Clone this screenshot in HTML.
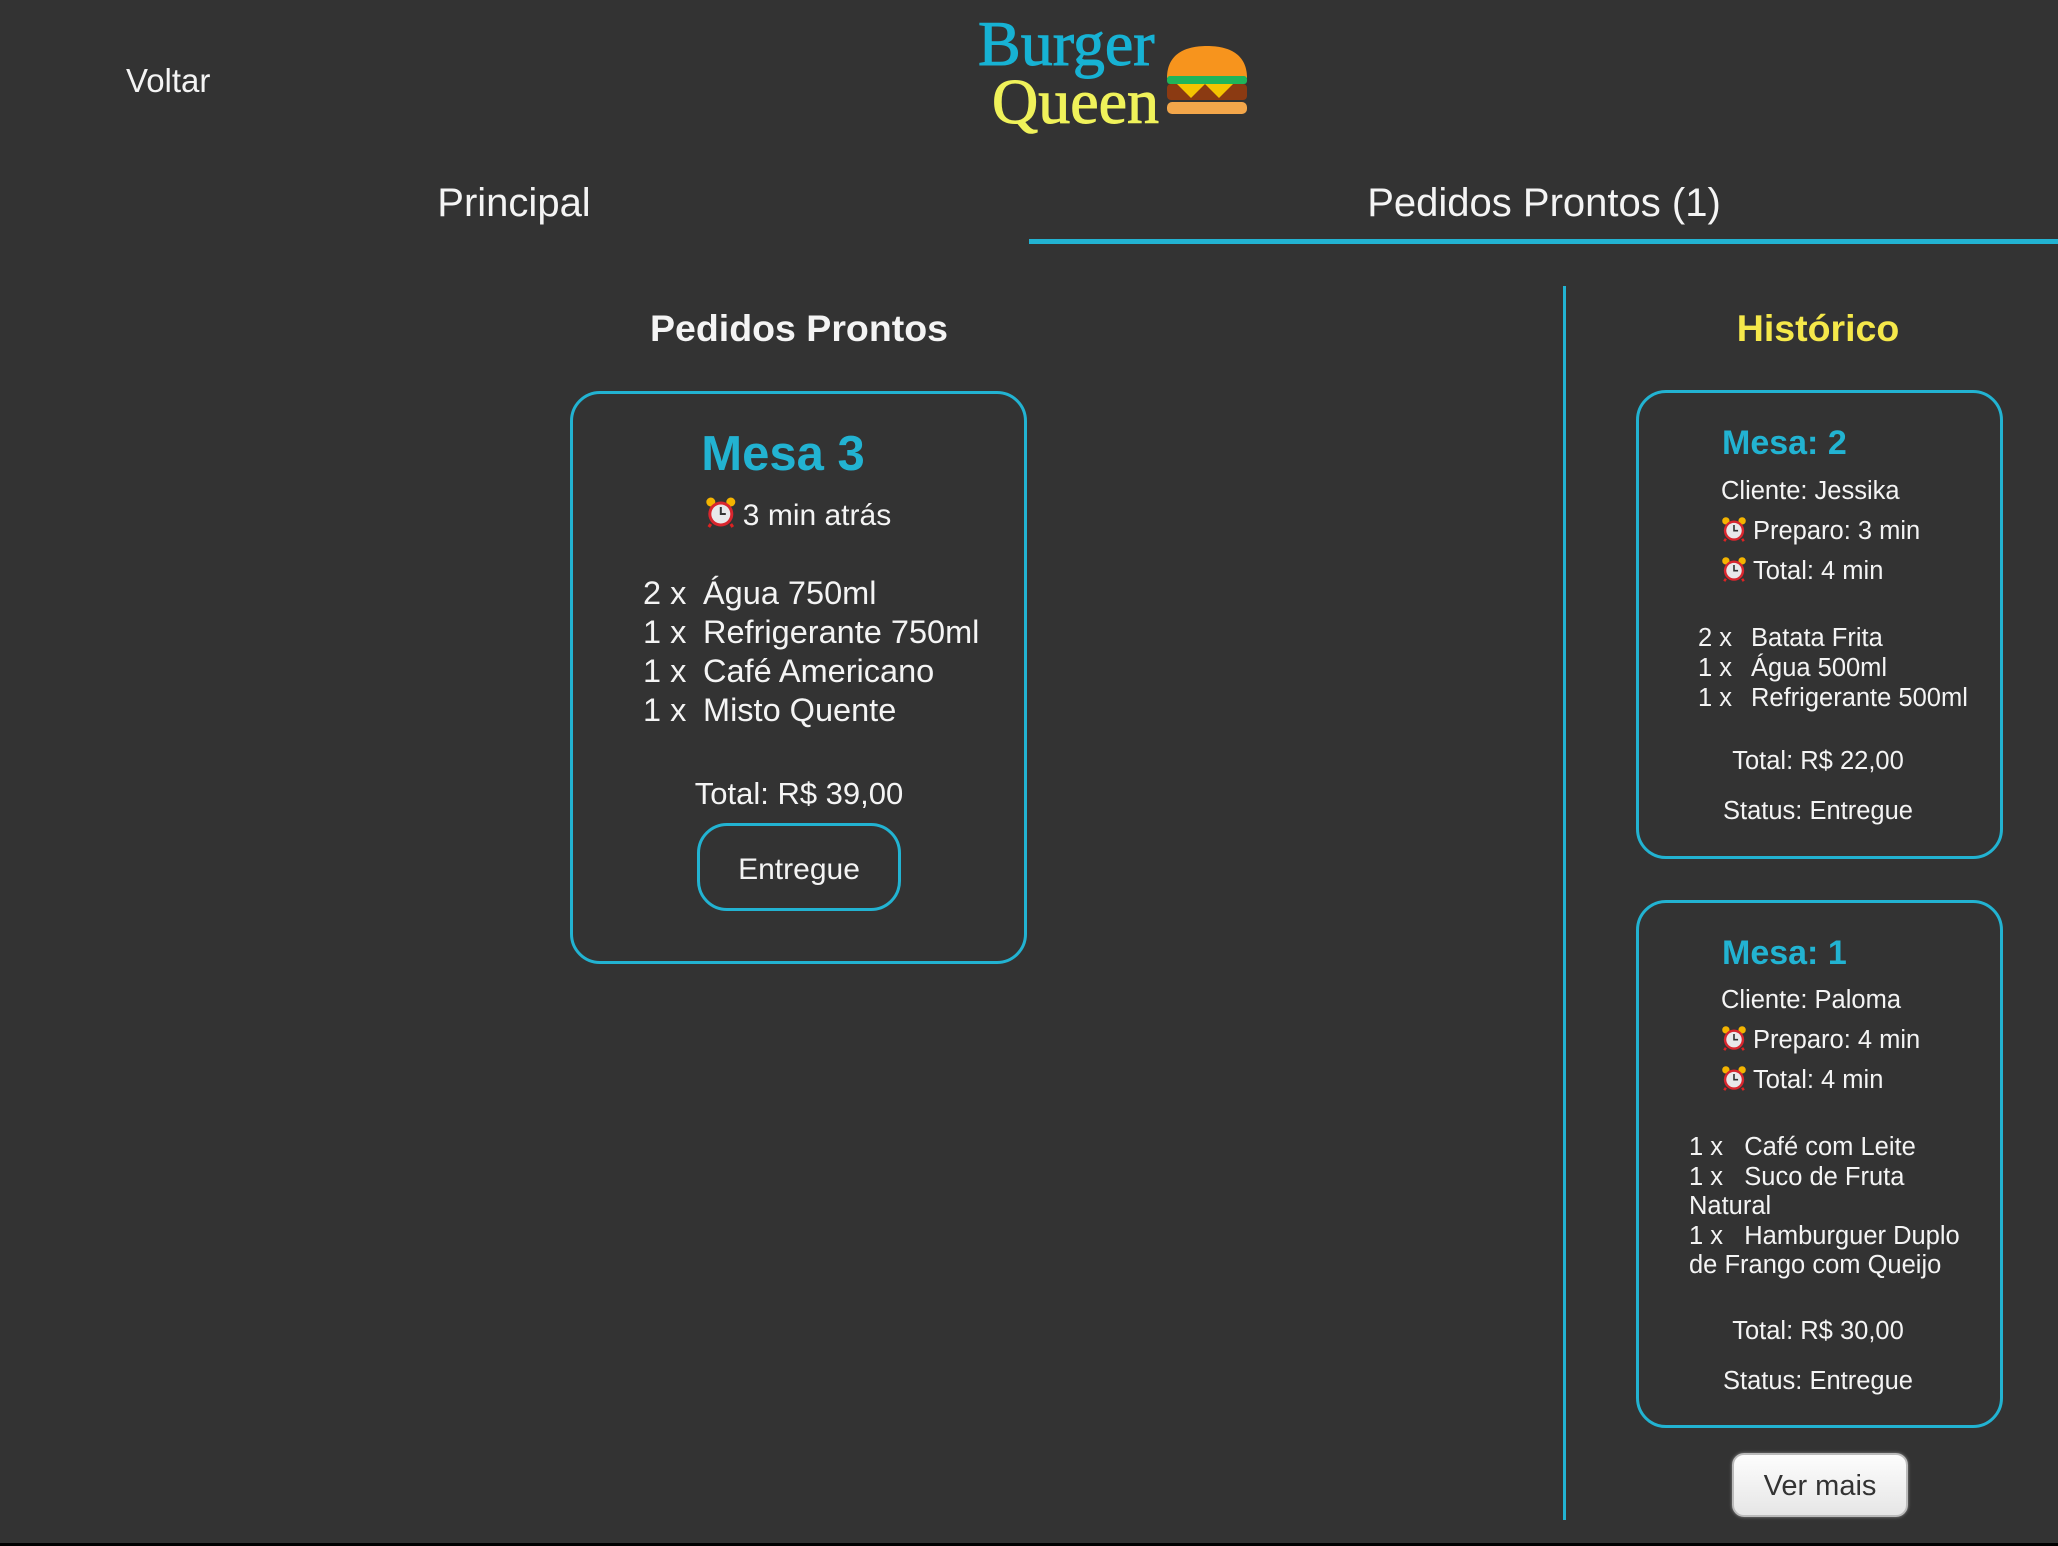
<!DOCTYPE html>
<html><head><meta charset="utf-8"><style>
body{margin:0;width:2058px;height:1546px;background:#333333;overflow:hidden;position:relative;font-family:"Liberation Sans",sans-serif;color:#f4f4f4}
.t{position:absolute;line-height:1;white-space:nowrap}
.c{text-align:center;transform:translateX(-50%)}
.card{position:absolute;border:3px solid #22b3d2;border-radius:30px;box-sizing:border-box}
.ck{display:inline-block;vertical-align:-3px;margin-right:6px}
</style></head><body>
<svg width="0" height="0" style="position:absolute"><defs>
<symbol id="clk" viewBox="0 0 32 32">
<circle cx="6" cy="6" r="4.5" fill="#f4b400"/><circle cx="26" cy="6" r="4.5" fill="#f4b400"/>
<path d="M6 28l-2 3M26 28l2 3" stroke="#d22" stroke-width="3"/>
<circle cx="16" cy="18" r="12.5" fill="#d9262e"/><circle cx="16" cy="18" r="9.5" fill="#e8e8ea"/>
<path d="M16 11v7h5" stroke="#333" stroke-width="2" fill="none"/>
</symbol></defs></svg>

<div class="t" style="left:126px;top:64px;font-size:33px">Voltar</div>
<div class="t" style="left:978px;top:12px;font-family:'Liberation Serif',serif;font-size:64px;color:#17b2d4;-webkit-text-stroke:1px #17b2d4">Burger</div>
<div class="t" style="left:992px;top:70px;font-family:'Liberation Serif',serif;font-size:64px;color:#f0f25a;-webkit-text-stroke:1px #f0f25a">Queen</div>
<svg style="position:absolute;left:1165px;top:44px" width="84" height="72" viewBox="0 0 84 72">
<path d="M2 34C2 10 20 2 42 2S82 10 82 34Z" fill="#f7941d"/>
<rect x="2" y="32" width="80" height="8" rx="3" fill="#1fb55a"/>
<rect x="2" y="40" width="80" height="16" rx="4" fill="#8b3a12"/>
<path d="M12 40l14 14 14-14 14 14 14-14Z" fill="#f5c400"/>
<rect x="2" y="58" width="80" height="12" rx="5" fill="#f3a64a"/>
</svg>

<div class="t c" style="left:514px;top:183px;font-size:40px">Principal</div>
<div class="t c" style="left:1544px;top:183px;font-size:40px">Pedidos Prontos (1)</div>
<div style="position:absolute;left:1029px;top:239px;width:1029px;height:5px;background:#22b3d2"></div>

<div class="t c" style="left:799px;top:310px;font-size:37.5px;font-weight:bold">Pedidos Prontos</div>
<div style="position:absolute;left:1563px;top:286px;width:3px;height:1234px;background:#22b3d2"></div>
<div class="t c" style="left:1818px;top:310px;font-size:37.5px;font-weight:bold;color:#f5e84a">Histórico</div>

<div class="card" style="left:570px;top:391px;width:457px;height:573px"></div>
<div class="t c" style="left:783px;top:430px;font-size:49px;font-weight:bold;color:#22b3d2">Mesa 3</div>
<div class="t c" style="left:798px;top:496px;font-size:30px"><svg class="ck" width="32" height="32"><use href="#clk"/></svg>3 min atrás</div>
<div class="t" style="left:643px;top:574px;font-size:32.5px;line-height:39px">2 x<br>1 x<br>1 x<br>1 x</div>
<div class="t" style="left:703px;top:574px;font-size:32.5px;line-height:39px">Água 750ml<br>Refrigerante 750ml<br>Café Americano<br>Misto Quente</div>
<div class="t c" style="left:799px;top:778px;font-size:31px">Total: R$ 39,00</div>
<div style="position:absolute;left:697px;top:823px;width:204px;height:88px;box-sizing:border-box;border:3px solid #22b3d2;border-radius:30px"></div>
<div class="t c" style="left:799px;top:855px;font-size:30px">Entregue</div>

<div class="card" style="left:1636px;top:390px;width:367px;height:469px"></div>
<div class="t" style="left:1722px;top:426px;font-size:34px;font-weight:bold;color:#22b3d2">Mesa: 2</div>
<div class="t" style="left:1721px;top:471px;font-size:25.5px;line-height:40px">Cliente: Jessika<br><svg class="ck" width="26" height="26"><use href="#clk"/></svg>Preparo: 3 min<br><svg class="ck" width="26" height="26"><use href="#clk"/></svg>Total: 4 min</div>
<div class="t" style="left:1698px;top:623px;font-size:25.5px;line-height:30px">2 x<br>1 x<br>1 x</div>
<div class="t" style="left:1751px;top:623px;font-size:25.5px;line-height:30px">Batata Frita<br>Água 500ml<br>Refrigerante 500ml</div>
<div class="t c" style="left:1818px;top:749px;font-size:25.5px">Total: R$ 22,00</div>
<div class="t c" style="left:1818px;top:799px;font-size:25.5px">Status: Entregue</div>

<div class="card" style="left:1636px;top:900px;width:367px;height:528px"></div>
<div class="t" style="left:1722px;top:936px;font-size:34px;font-weight:bold;color:#22b3d2">Mesa: 1</div>
<div class="t" style="left:1721px;top:980px;font-size:25.5px;line-height:40px">Cliente: Paloma<br><svg class="ck" width="26" height="26"><use href="#clk"/></svg>Preparo: 4 min<br><svg class="ck" width="26" height="26"><use href="#clk"/></svg>Total: 4 min</div>
<div class="t" style="left:1689px;top:1133px;font-size:25.5px;line-height:29.5px;white-space:normal;width:292px">1 x&nbsp;&nbsp;&nbsp;Café com Leite<br>1 x&nbsp;&nbsp;&nbsp;Suco de Fruta Natural<br>1 x&nbsp;&nbsp;&nbsp;Hamburguer Duplo de Frango com Queijo</div>
<div class="t c" style="left:1818px;top:1319px;font-size:25.5px">Total: R$ 30,00</div>
<div class="t c" style="left:1818px;top:1369px;font-size:25.5px">Status: Entregue</div>

<div style="position:absolute;left:1732px;top:1453px;width:176px;height:64px;box-sizing:border-box;border-radius:12px;background:linear-gradient(#fdfdfd,#e6e6e6);border:2px solid #bbb;box-shadow:0 0 3px #888"></div>
<div class="t c" style="left:1820px;top:1472px;font-size:29px;color:#333">Ver mais</div>
<div style="position:absolute;left:0;top:1543px;width:2058px;height:3px;background:#000"></div>
</body></html>
